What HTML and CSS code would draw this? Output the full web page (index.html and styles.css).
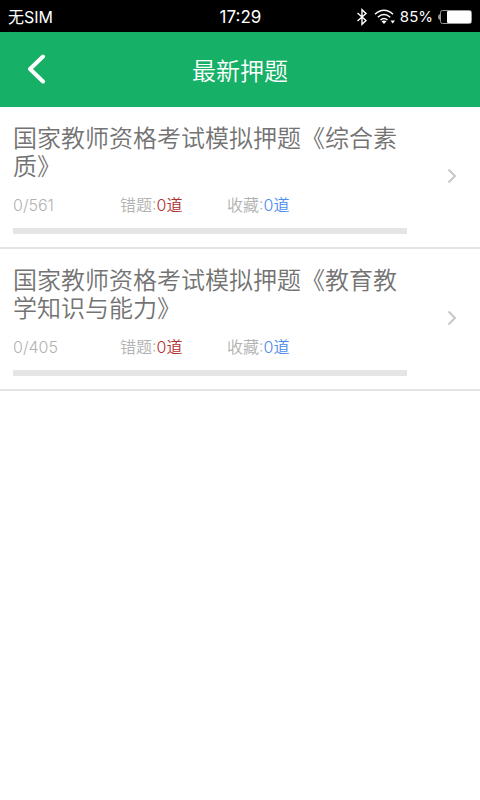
FILE: index.html
```html
<!DOCTYPE html>
<html lang="zh-CN">
<head>
<meta charset="utf-8">
<meta name="viewport" content="width=device-width, initial-scale=1">
<title>最新押题</title>
<link rel="stylesheet" href="styles.css">
</head>
<body>
<div class="status">
  <span class="carrier">无SIM</span>
  <span class="clock">17:29</span>
  <span class="indicators">
    <svg class="bluetooth" width="12" height="18" viewBox="0 0 12 18" fill="none" stroke="#fff" stroke-width="1.4"><path d="M1.5 5 10 12.5 6 16.3V1.7L10 5.500 1.500 13"/></svg>
    <svg class="wifi" width="22" height="16" viewBox="0 0 22 16" fill="none" stroke="#fff" stroke-width="1.5"><path d="M1 5.200Q10 -2.800 19 5.200M3.800 8.200Q10 2.800 16.200 8.200M6.500 11Q10 8 13.500 11"/><path d="M7.500 12.300Q10 10.500 12.500 12.300L10 15ZM16.500 11.500H21L18.700 14.500Z" fill="#fff" stroke="none"/></svg>
    <span>85%</span>
    <svg width="36" height="16" viewBox="0 0 36 16"><path d="M3 5Q1 5.500 1 8T3 11Z" fill="#999"/><rect x="3.500" y="1.500" width="31" height="13" rx="2" fill="none" stroke="#999"/><rect x="10" y="2" width="24" height="12" rx="1" fill="#fff"/></svg>
  </span>
</div>
<header class="header">
  <button class="back" type="button" aria-label="返回">
    <svg width="20" height="32" viewBox="0 0 20 32" fill="none" stroke="#fff" stroke-width="4" stroke-linecap="round" stroke-linejoin="round"><path d="M17 2.500 4 15 17 27.500"/></svg>
  </button>
  <h1>最新押题</h1>
</header>
<main>
  <a class="item" href="#">
    <div class="content">
      <h2>国家教师资格考试模拟押题《综合素质》</h2>
      <div class="stats"><span>0/561</span><span>错题:<b class="wrong">0道</b></span><span>收藏:<b class="saved">0道</b></span></div>
      <div class="track"></div>
    </div>
    <svg class="arrow" width="10" height="16" viewBox="0 0 10 16" fill="none" stroke="#c7c7cb" stroke-width="2"><path d="M1.500 1.500 8 8 1.500 14.500"/></svg>
  </a>
  <a class="item" href="#">
    <div class="content">
      <h2>国家教师资格考试模拟押题《教育教学知识与能力》</h2>
      <div class="stats"><span>0/405</span><span>错题:<b class="wrong">0道</b></span><span>收藏:<b class="saved">0道</b></span></div>
      <div class="track"></div>
    </div>
    <svg class="arrow" width="10" height="16" viewBox="0 0 10 16" fill="none" stroke="#c7c7cb" stroke-width="2"><path d="M1.500 1.500 8 8 1.500 14.500"/></svg>
  </a>
</main>
</body>
</html>
```
FILE: styles.css
```css
* {
  box-sizing: border-box;
}

body {
  margin: 0;
  background: #fff;
  font-family: Inter, "Noto Sans CJK SC", sans-serif;
}

.status {
  display: grid;
  grid-template-columns: 1fr auto 1fr;
  align-items: center;
  height: 32px;
  padding: 0 7px 0 8px;
  background: #000;
  color: #fff;
  font-size: 16px;
  font-weight: 400;
  line-height: 34px;
}

.clock {
  font-size: 17px;
}

.indicators {
  display: flex;
  align-items: center;
  justify-content: flex-end;
  gap: 4px;
  font-size: 15px;
}

.bluetooth {
  margin-right: 2px;
}

.header {
  display: grid;
  grid-template-columns: 72px 1fr 72px;
  align-items: center;
  height: 75px;
  background: #16b067;
  color: #fff;
}

.back {
  display: flex;
  padding: 0 26px;
  border: 0;
  background: none;
}

.header h1 {
  margin: 0;
  padding-top: 4px;
  font-size: 24px;
  font-weight: 350;
  line-height: 36px;
  text-align: center;
}

.item {
  display: flex;
  justify-content: space-between;
  padding: 18px 23px 13px 13px;
  border-bottom: 2px solid #e4e4e4;
  color: #b2b2b2;
  text-decoration: none;
}

.content {
  flex: 1;
  margin-right: 40px;
}

.content h2 {
  margin: 0;
  color: #737373;
  font-size: 24px;
  font-weight: 350;
  line-height: 28px;
}

.stats {
  display: grid;
  grid-template-columns: 107px 107px 1fr;
  margin: 12px 0 11px;
  font-size: 16px;
  font-weight: 350;
  line-height: 24px;
}

.stats b {
  font-weight: 350;
}

.wrong {
  color: #b03030;
}

.saved {
  color: #4a8cf0;
}

.track {
  height: 6px;
  background: #e5e5e5;
}

.arrow {
  margin-top: 43px;
}
```
